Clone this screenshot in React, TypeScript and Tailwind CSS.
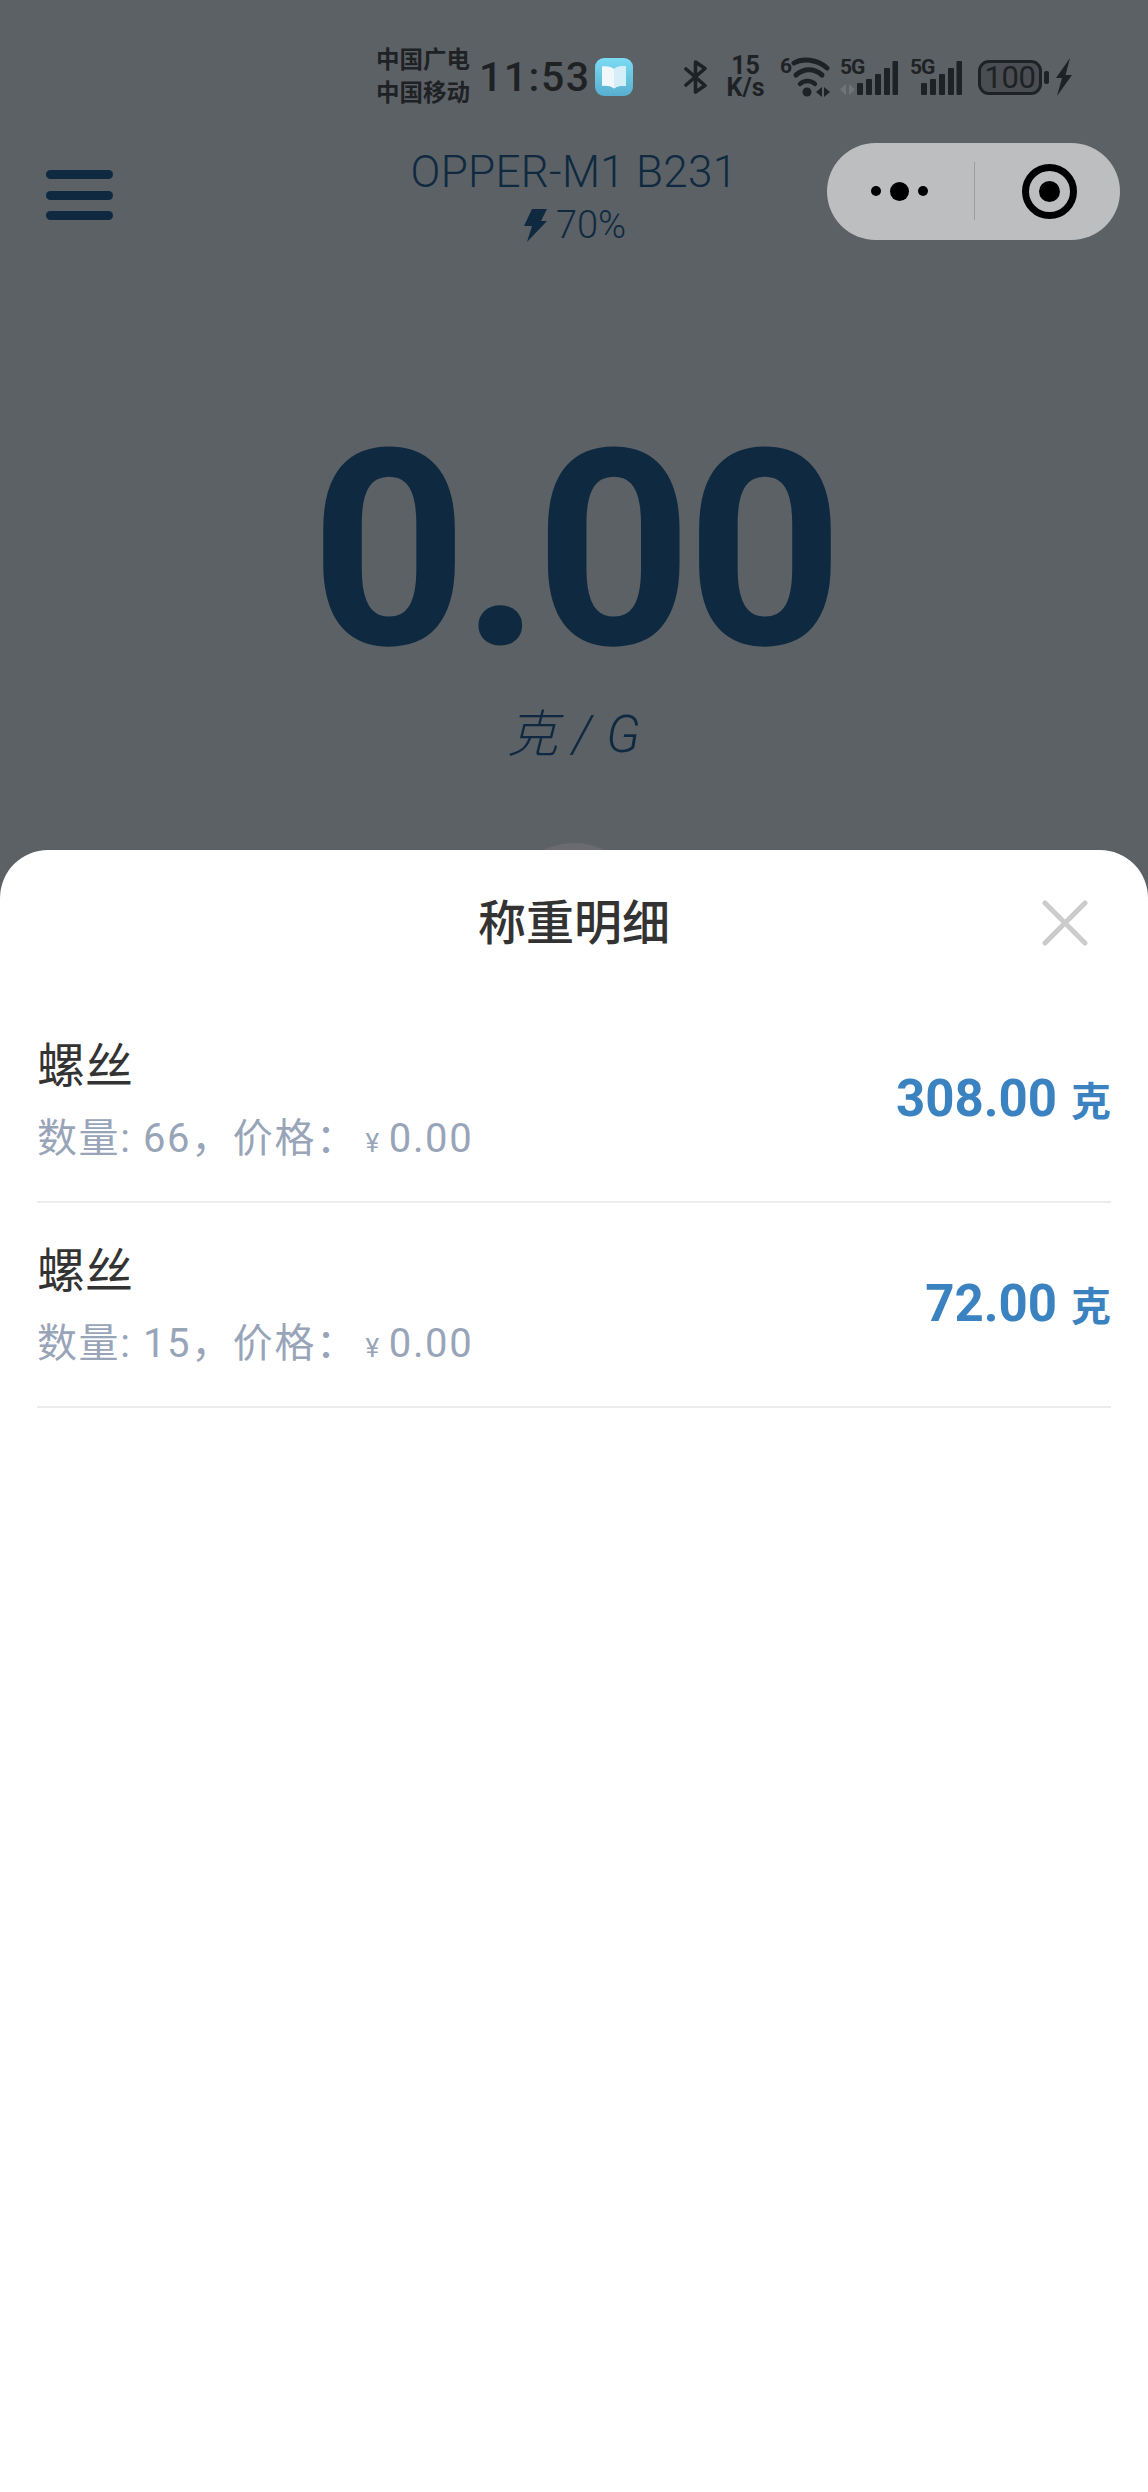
import React from "react";

const rows = [
  { name: "螺丝", count: 66, weight: "308.00" },
  { name: "螺丝", count: 15, weight: "72.00" },
];

const Bars = () => (
  <svg width="41" height="34" viewBox="0 0 41 34" fill="#1f2225">
    <rect x="0" y="22" width="6" height="12" rx="1" />
    <rect x="9" y="18" width="6" height="16" rx="1" />
    <rect x="18" y="13" width="6" height="21" rx="1" />
    <rect x="27" y="7" width="6" height="27" rx="1" />
    <rect x="35.500" y="0" width="5.500" height="34" rx="1" />
  </svg>
);

const StatusBar = () => (
  <div className="flex h-[66px] items-center pl-[376px] text-[#1f2225] mt-[44px]">
    <div className="w-[94px] text-[23.5px] leading-[33px] font-bold whitespace-nowrap">
      <div>中国广电</div>
      <div>中国移动</div>
    </div>
    <div className="ml-[9px] w-[106px] text-[41px] leading-none font-medium tracking-[1.5px] whitespace-nowrap">11:53</div>
    {/* 应用图标 */}
    <div className="ml-[10px] flex h-[38px] w-[38px] items-center justify-center rounded-[9px] bg-gradient-to-b from-[#7cdcf2] to-[#57afcf]">
      <svg width="28" height="28" viewBox="0 0 28 28">
        <path d="M14 6C11 3.500 6 3 2 3.500V23c4-.5 9 0 12 2.500C17 23 22 22.500 26 23V3.500C22 3 17 3.500 14 6Z" fill="#f0f8fc" />
        <path d="M14 6v19.500C17 23 22 22.500 26 23V3.500C22 3 17 3.500 14 6Z" fill="#d5eef8" />
      </svg>
    </div>
    <svg className="ml-[51px]" width="23" height="34" viewBox="0 0 23 34" fill="none" stroke="#1f2225" strokeWidth="3.600" strokeLinecap="round" strokeLinejoin="round">
      <path d="M2 9l19 16.500L11.500 32V2L21 8.500 2 25" />
    </svg>
    <div className="ml-[18px] w-[41px] text-center text-[25px] leading-[22px] font-bold">
      <div>15</div>
      <div className="whitespace-nowrap">K/s</div>
    </div>
    {/* wifi 6 */}
    <div className="relative ml-[14px] h-[40px] w-[52px]">
      <span className="absolute left-0 top-[-1px] text-[21px] leading-[20px] font-bold">6</span>
      <svg className="absolute left-0 top-0" width="52" height="40" viewBox="0 0 52 40" fill="none" stroke="#1f2225" strokeLinecap="round">
        <path d="M14 6C22 1 37 2 47 11" strokeWidth="5" />
        <path d="M16 18C24 11 34 11 42 18" strokeWidth="5" />
        <path d="M20 27c4-4 11-4 15 0" strokeWidth="4.500" />
        <circle cx="27" cy="35" r="4.500" fill="#1f2225" stroke="none" />
        <path d="M36 35l6-5v10zM44 30v10l6-5z" fill="#1f2225" stroke="none" />
      </svg>
    </div>
    {/* sim 1 */}
    <div className="relative ml-[8px] h-[36px] w-[58px]">
      <span className="absolute left-0 top-[-2px] text-[21px] leading-[20px] font-bold tracking-[-1px]">5G</span>
      <svg className="absolute left-0 bottom-0" width="16" height="11" viewBox="0 0 16 11" fill="#6f7478">
        <path d="M0 5.500l6-5.500v11zM9 0v11l6-5.500z" />
      </svg>
      <div className="absolute right-0 bottom-0">
        <Bars />
      </div>
    </div>
    {/* sim 2 */}
    <div className="relative ml-[12px] h-[36px] w-[52px]">
      <span className="absolute left-0 top-[-2px] text-[21px] leading-[20px] font-bold tracking-[-1px]">5G</span>
      <div className="absolute right-0 bottom-0">
        <Bars />
      </div>
    </div>
    {/* 电量 */}
    <div className="ml-[16px] flex h-[35px] w-[64px] items-center justify-center rounded-[11px] border-[3px] border-[#1f2225] bg-[#4a4e52] text-[31px] leading-none tracking-[-0.5px]">
      100
    </div>
    <div className="ml-[2px] h-[13px] w-[5px] rounded-[2px] bg-[#1f2225]" />
    <svg className="ml-[7px]" width="16" height="38" viewBox="0 0 16 38" fill="#1f2225">
      <path d="M14 0L0 20h6L1 38 16 17H9.500L14 0Z" />
    </svg>
  </div>
);

const Header = () => (
  <div className="grid h-[120px] mt-[21px] grid-cols-[1fr_auto_1fr] text-[#0f2a40]">
    <div className="flex flex-col gap-[11.5px] pl-[46px] pt-[39px]">
      <div className="h-[9px] w-[67px] rounded-full bg-[#0f2a40]" />
      <div className="h-[9px] w-[67px] rounded-full bg-[#0f2a40]" />
      <div className="h-[9px] w-[67px] rounded-full bg-[#0f2a40]" />
    </div>
    <div className="flex flex-col items-center pt-[18px]">
      <div className="text-[44px] leading-[46px] font-light tracking-[0.3px] whitespace-nowrap">OPPER-M1 B231</div>
      <div className="mt-[5px] flex items-center gap-[9px] text-[38px] leading-[50px] font-light">
        <svg className="ml-[2px]" width="23" height="33" viewBox="0 0 23 33" fill="#0f2a40">
          <path d="M8 0h15l-6 12h6L3 33l5-16H0L8 0Z" />
        </svg>
        <span>70%</span>
      </div>
    </div>
    <div className="flex items-center justify-end pr-[28px]">
      <div className="flex h-[97px] w-[293px] items-center rounded-full bg-[#bdbec0]">
        <div className="flex w-[147px] items-center justify-end gap-[9px] pr-[46px]">
          <div className="h-[10px] w-[10px] rounded-full bg-black" />
          <div className="h-[19px] w-[19px] rounded-full bg-black" />
          <div className="h-[10px] w-[10px] rounded-full bg-black" />
        </div>
        <div className="h-[58px] w-[1px] bg-[#9c9da0]" />
        <div className="flex flex-1 justify-center pl-[4px]">
          <svg width="55" height="55" viewBox="0 0 55 55">
            <circle cx="27.500" cy="27.500" r="24" fill="none" stroke="#000" strokeWidth="7" />
            <circle cx="27.500" cy="27.500" r="10.500" fill="#000" />
          </svg>
        </div>
      </div>
    </div>
  </div>
);

export default function App() {
  return (
    <div className="relative flex min-h-[2492px] w-[1148px] flex-col overflow-hidden bg-[#5c6166] font-[Roboto,'Noto_Sans_CJK_SC',sans-serif]">
      <div className="h-[850px] shrink-0">
        <StatusBar />
        <Header />
        <div className="mt-[156px] text-center text-[274px] leading-[287px] font-bold tracking-[-6px] text-[#0f2a40]">
          0.00
        </div>
        <div className="mt-[11px] text-center text-[51px] leading-[60px] font-light italic tracking-[1px] text-[#0f2a40]">
          克 / G
        </div>
      </div>

      {/* 露出来的按钮边缘 */}
      <div className="absolute left-[504px] top-[843px] h-[140px] w-[140px] rounded-full bg-[#696b6e]" />

      <div className="relative flex-1 rounded-t-[48px] bg-white px-[37px]">
        <div className="relative flex h-[148px] items-center justify-center text-[48px] font-medium text-[#333333]">
          称重明细
          <svg className="absolute right-[23px] top-[50px]" width="46" height="46" viewBox="0 0 46 46" fill="none" stroke="#cccccc" strokeWidth="5" strokeLinecap="round">
            <path d="M3 3l40 40M43 3L3 43" />
          </svg>
        </div>
        <div>
          {rows.map((row, i) => (
            <div key={i} className="flex h-[205px] items-center justify-between border-b-2 border-[#ececec]">
              <div className="pt-[8px]">
                <div className="text-[48px] leading-[60px] text-[#333333]">{row.name}</div>
                <div className="mt-[14px] flex items-baseline text-[40px] leading-[56px] tracking-[1.6px] text-[#98a4b8]">
                  数量: {row.count}，价格：<span className="ml-[8px] mr-[8px] text-[26px]">¥</span>0.00
                </div>
              </div>
              <div className="flex items-baseline gap-[14px] font-bold text-[#3b82c0]">
                <span className="text-[51px]">{row.weight}</span>
                <span className="text-[40px]">克</span>
              </div>
            </div>
          ))}
        </div>
      </div>
    </div>
  );
}
